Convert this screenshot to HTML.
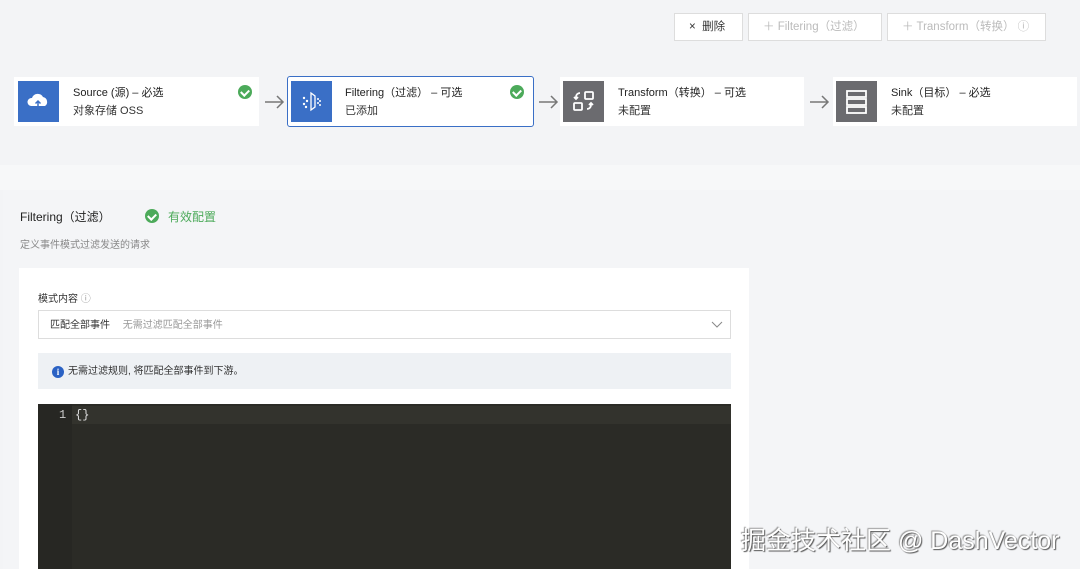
<!DOCTYPE html>
<html><head><meta charset="utf-8"><style>
*{box-sizing:border-box;margin:0;padding:0}
body{width:1080px;height:569px;overflow:hidden;background:#f3f4f6;font-family:"Liberation Sans","Noto Sans CJK SC",sans-serif;position:relative;color:#333}
.abs{position:absolute}
.btn{position:absolute;top:13px;height:28px;border:1px solid #ddd;background:#fff;font-size:11.5px;color:#bbb;line-height:26px;padding-left:14px}
.card{position:absolute;top:77px;height:49px;background:#fff}
.ic{position:absolute;left:0;top:4px;width:41px;height:41px}
.t1{position:absolute;left:55px;top:7px;font-size:11px;color:#222}
.t2{position:absolute;left:55px;top:25px;font-size:11px;color:#333}
.ok{position:absolute;top:8px;width:14px;height:14px;border-radius:50%;background:#4caa5a}
.ok:after{content:"";position:absolute;left:4px;top:3px;width:4px;height:6px;border:solid #fff;border-width:0 2px 2px 0;transform:rotate(45deg)}
.arr{position:absolute;top:92px;width:22px;height:20px}
</style></head><body>
<div class="btn" style="left:674px;width:69px;color:#333">×&nbsp; 删除</div>
<div class="btn" style="left:748px;width:134px">＋ Filtering（过滤）</div>
<div class="btn" style="left:887px;width:159px">＋ Transform（转换） ⓘ</div>

<div class="card" style="left:14px;width:245px">
 <div class="ic" style="left:4px;background:#3a6fc6"><svg width="41" height="41"><path d="M13 25a4 4 0 0 1 1-8 6 6 0 0 1 11-1 5 5 0 0 1 2 9z" fill="#fff"/><path d="M20 26v-6m-2.5 2.5L20 20l2.5 2.5" stroke="#3a6fc6" stroke-width="1.5" fill="none"/></svg></div>
 <div class="t1" style="left:59px">Source (源) – 必选</div><div class="t2" style="left:59px">对象存储 OSS</div>
 <div class="ok" style="left:224px"></div></div>
<svg class="arr" style="left:263px"><path d="M2 10h18m-6-6 6 6-6 6" stroke="#777" stroke-width="1.5" fill="none"/></svg>
<div class="card" style="left:287px;top:76px;width:247px;height:51px;border:1.5px solid #3a6fc6;border-radius:3px">
 <div class="ic" style="left:3px;top:4px;background:#3a6fc6"><svg width="41" height="41"><path d="M20 12v17l4-3V15z" stroke="#fff" fill="none" stroke-width="1.3"/><g fill="#fff"><circle cx="13" cy="17" r="1.2"/><circle cx="16" cy="20" r="1.2"/><circle cx="13" cy="23" r="1.2"/><circle cx="15" cy="26" r="1.2"/><circle cx="27" cy="18" r="1"/><circle cx="27" cy="22" r="1"/><circle cx="29" cy="20" r="1"/><circle cx="29" cy="24" r="1"/></g></svg></div>
 <div class="t1" style="left:57px;top:7px">Filtering（过滤） – 可选</div><div class="t2" style="left:57px;top:25px">已添加</div>
 <div class="ok" style="left:222px"></div></div>
<svg class="arr" style="left:537px"><path d="M2 10h18m-6-6 6 6-6 6" stroke="#777" stroke-width="1.5" fill="none"/></svg>
<div class="card" style="left:560px;width:244px">
 <div class="ic" style="left:3px;background:#6b6b6f"><svg width="41" height="41"><g stroke="#fff" stroke-width="1.8" fill="none"><rect x="22" y="11" width="8" height="7" rx="1"/><rect x="11" y="22" width="8" height="7" rx="1"/><path d="M17 12a4 4 0 0 0-4 4v2m-2-2 2 2 2-2M24 28a4 4 0 0 0 4-4v-1m-2 1 2-2 2 2"/></g></svg></div>
 <div class="t1" style="left:58px">Transform（转换） – 可选</div><div class="t2" style="left:58px">未配置</div></div>
<svg class="arr" style="left:808px"><path d="M2 10h18m-6-6 6 6-6 6" stroke="#777" stroke-width="1.5" fill="none"/></svg>
<div class="card" style="left:833px;width:244px">
 <div class="ic" style="left:3px;background:#6b6b6f"><svg width="41" height="41"><g stroke="#fff" stroke-width="1.8" fill="none"><rect x="11" y="10" width="19" height="6"/><rect x="11" y="18" width="19" height="6"/><rect x="11" y="26" width="19" height="6"/></g></svg></div>
 <div class="t1" style="left:58px">Sink（目标） – 必选</div><div class="t2" style="left:58px">未配置</div></div>

<div class="abs" style="left:0;top:165px;width:1080px;height:25px;background:#f7f8f9"></div>
<div class="abs" style="left:3px;top:190px;width:1077px;height:379px;background:#f4f5f7"></div>
<div class="abs" style="left:20px;top:208px;font-size:12px;color:#222">Filtering（过滤）</div>
<div class="ok abs" style="left:145px;top:209px"></div>
<div class="abs" style="left:168px;top:208px;font-size:12px;color:#4caa5a">有效配置</div>
<div class="abs" style="left:20px;top:236px;font-size:10px;color:#888">定义事件模式过滤发送的请求</div>

<div class="abs" style="left:19px;top:268px;width:730px;height:301px;background:#fff"></div>
<div class="abs" style="left:38px;top:290px;font-size:10px;color:#333">模式内容 <span style="color:#999">ⓘ</span></div>
<div class="abs" style="left:38px;top:310px;width:693px;height:29px;border:1px solid #ddd;background:#fff;font-size:10px;line-height:29px;padding-left:11px">匹配全部事件 <span style="color:#999;margin-left:10px">无需过滤匹配全部事件</span>
 <svg class="abs" style="right:7px;top:10px" width="12" height="8"><path d="M1 1l5 5 5-5" stroke="#888" fill="none"/></svg></div>
<div class="abs" style="left:38px;top:353px;width:693px;height:36px;background:#eef1f4;font-size:10px;line-height:38px;padding-left:30px;color:#333">无需过滤规则, 将匹配全部事件到下游。</div>
<div class="abs" style="left:52px;top:366px;width:12px;height:12px;border-radius:50%;background:#2b62c4;color:#fff;font:bold 9px 'Liberation Serif',serif;text-align:center;line-height:12px">i</div>

<div class="abs" style="left:38px;top:404px;width:693px;height:165px;background:#2b2b26"></div>
<div class="abs" style="left:38px;top:404px;width:34px;height:165px;background:#272723"></div>
<div class="abs" style="left:72px;top:406px;width:659px;height:18px;background:#33332d"></div>
<div class="abs" style="left:59px;top:408px;font:12px 'Liberation Mono',monospace;color:#ccc">1</div>
<div class="abs" style="left:75px;top:408px;font:12px 'Liberation Mono',monospace;color:#ddd">{}</div>

<div class="abs" style="left:741px;top:521px;font-size:25px;color:#fff;text-shadow:1px 1px 1px #555,-1px -1px 1px #999">掘金技术社区 @ DashVector</div>
</body></html>
